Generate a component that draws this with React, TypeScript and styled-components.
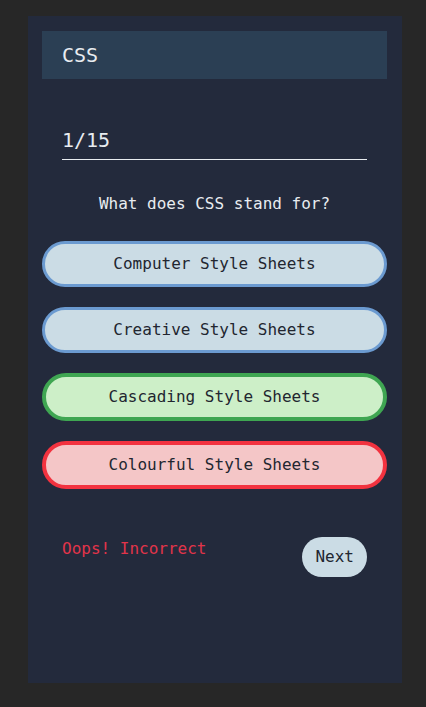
import React from 'react';
import styled, { createGlobalStyle, css } from 'styled-components';

type Status = 'idle' | 'correct' | 'wrong';

const GlobalStyle = createGlobalStyle`
  html, body {
    margin: 0;
    padding: 0;
    background-color: #272727;
  }

  body {
    font-family: 'DejaVu Sans Mono', monospace;
  }
`;

const Page = styled.div`
  min-height: 707px;
  padding: 16px 24px 24px 28px;
  box-sizing: border-box;
`;

const Card = styled.div`
  width: 374px;
  height: 667px;
  box-sizing: border-box;
  padding: 15px 15px 15px 14px;
  background-color: #232a3c;
`;

const Header = styled.h1`
  margin: 0;
  height: 48px;
  padding: 0 20px;
  display: flex;
  align-items: center;
  background-color: #2b3f54;
  color: #e8ecf0;
  font-size: 20px;
  font-weight: normal;
`;

const Progress = styled.div`
  margin: 49px 20px 0;
  padding-bottom: 7px;
  border-bottom: 1px solid #e8ecf0;
  color: #e8ecf0;
  font-size: 20px;
  line-height: 24px;
`;

const Question = styled.p`
  margin: 34px 0 0;
  text-align: center;
  color: #e8ecf0;
  font-size: 16px;
  line-height: 20px;
`;

const Answers = styled.ul`
  margin: 27px 0 0;
  padding: 0;
  list-style-type: none;
  display: flex;
  flex-direction: column;
  gap: 20px;
`;

const statusStyles = {
  idle: css`
    border: 3px solid #6b9ad0;
    background-color: #cbdce5;
  `,
  correct: css`
    border: 4px solid #3fa652;
    background-color: #cdefc8;
  `,
  wrong: css`
    border: 4px solid #f2323f;
    background-color: #f4c6c7;
  `,
};

const Answer = styled.button<{ $status: Status }>`
  display: block;
  width: 100%;
  padding: 10px;
  border-radius: 9999px;
  color: #222630;
  font-family: 'DejaVu Sans Mono', monospace;
  font-size: 16px;
  line-height: 20px;
  text-align: center;
  cursor: pointer;
  ${p => statusStyles[p.$status]}
`;

const Footer = styled.div`
  margin-top: 48px;
  padding: 0 20px;
  display: flex;
  justify-content: space-between;
  align-items: flex-start;
`;

const Feedback = styled.span`
  margin-top: 2px;
  color: #e1344a;
  font-size: 16px;
  line-height: 20px;
`;

const NextButton = styled.button`
  height: 40px;
  padding: 0 13px;
  border: none;
  border-radius: 20px;
  background-color: #cbdce5;
  color: #222630;
  font-family: 'DejaVu Sans Mono', monospace;
  font-size: 16px;
  line-height: 20px;
  cursor: pointer;
`;

const answers: { text: string; status: Status }[] = [
  { text: 'Computer Style Sheets', status: 'idle' },
  { text: 'Creative Style Sheets', status: 'idle' },
  { text: 'Cascading Style Sheets', status: 'correct' },
  { text: 'Colourful Style Sheets', status: 'wrong' },
];

const App: React.FC = () => {
  return (
    <Page>
      <GlobalStyle />
      <Card>
        <Header>CSS</Header>
        <Progress>1/15</Progress>
        <Question>What does CSS stand for?</Question>
        <Answers>
          {answers.map(item => (
            <li key={item.text}>
              <Answer $status={item.status}>{item.text}</Answer>
            </li>
          ))}
        </Answers>
        <Footer>
          <Feedback>Oops! Incorrect</Feedback>
          <NextButton>Next</NextButton>
        </Footer>
      </Card>
    </Page>
  );
};

export default App;
